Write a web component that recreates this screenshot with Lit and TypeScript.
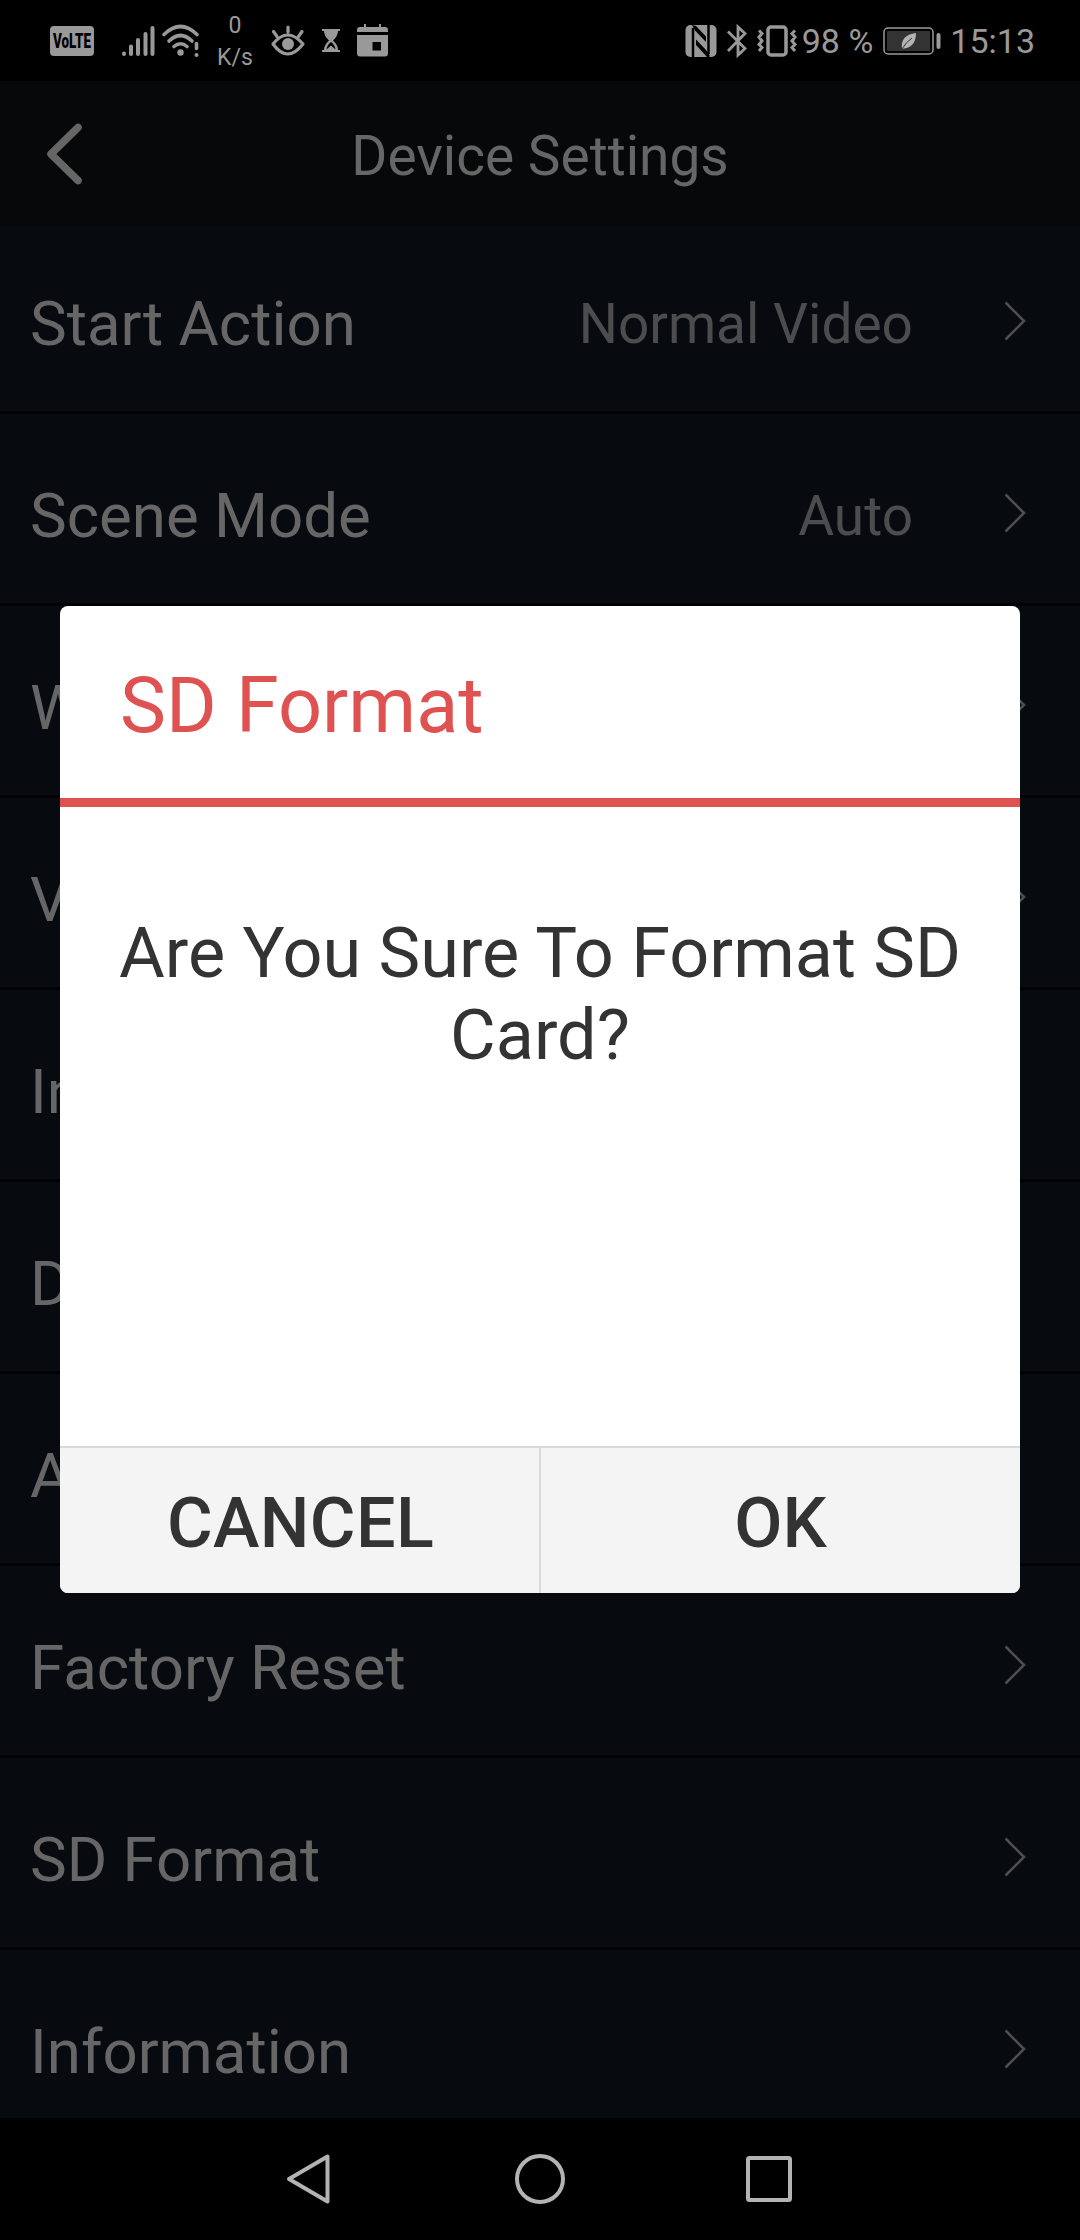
import { LitElement, html, css, svg } from "lit";
import { customElement } from "lit/decorators.js";

interface Row {
  label: string;
  value?: string;
  plain?: boolean;
}

const ROWS: Row[] = [
  { label: "Start Action", value: "Normal Video" },
  { label: "Scene Mode", value: "Auto" },
  { label: "W" },
  { label: "V" },
  { label: "In", plain: true },
  { label: "D", plain: true },
  { label: "A", plain: true },
  { label: "Factory Reset" },
  { label: "SD Format" },
  { label: "Information" },
];

@customElement("app-root")
export class AppRoot extends LitElement {
  static styles = css`
    :host {
      display: block;
      font-family: Roboto, "Noto Sans", sans-serif;
    }
    .screen {
      position: relative;
      display: flex;
      flex-direction: column;
      width: 1080px;
      height: 2240px;
      overflow: hidden;
      background: #000;
    }
    svg {
      display: block;
      flex: none;
      overflow: visible;
    }
    .status {
      display: flex;
      align-items: center;
      height: 81px;
      flex: none;
      box-sizing: border-box;
      padding-left: 50px;
      padding-right: 45px;
      color: #999;
      font-size: 34px;
    }
    .volte-text {
      font: 900 19.5px Roboto, sans-serif;
    }
    .signal { margin-left: 27px; }
    .wifi { margin-left: 7px; }
    .speed {
      display: flex;
      flex-direction: column;
      align-items: center;
      width: 40px;
      margin-left: 15px;
      padding-top: 2px;
      font-size: 23px;
      line-height: 32px;
    }
    .eye { margin-left: 16px; }
    .glass { margin-left: 17px; }
    .cal { margin-left: 17px; }
    .spacer { flex: 1; }
    .bt { margin-left: 10px; }
    .vib { margin-left: 10px; }
    .pct { margin-left: 5px; }
    .batt { margin-left: 10px; }
    .time { margin-left: 9px; }
    .header {
      position: relative;
      z-index: 1;
      display: grid;
      grid-template-columns: 130px 1fr 130px;
      align-items: center;
      height: 144px;
      flex: none;
      background: #070809;
      color: #666;
    }
    .back { margin-left: 43px; margin-top: 1px; }
    .title {
      text-align: center;
      font-size: 55px;
      line-height: 64px;
      padding-top: 5px;
    }
    .list {
      flex: 1;
      min-height: 0;
      margin-top: -3px;
      overflow: hidden;
      background: #070a0e;
    }
    .row {
      display: flex;
      align-items: center;
      height: 192px;
      box-sizing: border-box;
      border-bottom: 3px solid #000104;
      padding: 14px 53px 0 30px;
    }
    .label {
      flex: 1;
      color: #666;
      font-size: 61.8px;
      line-height: 72px;
      white-space: nowrap;
    }
    .value {
      color: #4b4c4d;
      font-size: 55px;
      line-height: 64px;
      margin-right: 90px;
    }
    .chevron { margin-bottom: 6px; }
    .nav {
      display: flex;
      align-items: center;
      justify-content: center;
      height: 122px;
      flex: none;
      background: #000;
      box-sizing: border-box;
    }
    .circle { margin-left: 182px; }
    .square { margin-left: 178px; }
    .dialog {
      position: absolute;
      left: 60px;
      top: 606px;
      z-index: 2;
      display: flex;
      flex-direction: column;
      width: 960px;
      height: 987px;
      border-radius: 8px;
      overflow: hidden;
      background: #fff;
      color: #333;
    }
    .dialog-title {
      display: flex;
      align-items: center;
      box-sizing: border-box;
      height: 201px;
      padding: 8px 60px 0;
      border-bottom: 9px solid #df5252;
      color: #df5252;
      font-size: 77.4px;
      line-height: 92px;
    }
    .message {
      flex: 1;
      padding: 105px 50px 0;
      text-align: center;
      font-size: 70.2px;
      line-height: 82px;
    }
    .buttons {
      display: grid;
      grid-template-columns: 479px 2px 479px;
      height: 145px;
      border-top: 2px solid #dadada;
      background: #f4f4f4;
      font-size: 70px;
      font-weight: 500;
      line-height: 151px;
      text-align: center;
    }
    .cancel { letter-spacing: 0.4px; padding-left: 2px; }
    .split { background: #dadada; }
  `;

  private statusBar() {
    return html`
      <div class="status">
        <svg width="44" height="30" viewBox="0 0 44 30">
          <rect width="44" height="30" rx="4" fill="#999" />
          <text class="volte-text" x="3" y="22" fill="#000" textLength="38" lengthAdjust="spacingAndGlyphs">VoLTE</text>
        </svg>
        <svg class="signal" width="34" height="32" viewBox="0 0 34 32" fill="none" stroke="#999" stroke-width="4" stroke-linecap="round">
          <path d="M3 28.5v.5M10 21.500v7.500M17 15v14M24.500 9v20M31.500 3v26" />
        </svg>
        <svg class="wifi" width="38" height="34" viewBox="0 0 38 34" fill="none" stroke="#999" stroke-width="3.600" stroke-linecap="round">
          <path d="M2 10.500Q18.500 -5.500 35 10.500M7 17Q18.500 6 30 17M12 22.500Q18.500 17 25 22.500M34.500 19.500v5" />
          <circle cx="18.500" cy="28.500" r="3.200" fill="#999" stroke="none" />
          <circle cx="34.500" cy="31" r="2" fill="#999" stroke="none" />
        </svg>
        <div class="speed"><span>0</span><span>K/s</span></div>
        <svg class="eye" width="34" height="32" viewBox="0 0 34 32" fill="none" stroke="#999" stroke-width="3.200" stroke-linecap="round">
          <path d="M2 19Q16.500 1 32 19Q16.500 39 2 19ZM17 2v5M2.500 6.500l3.500 5M31 6.500l-3.500 5" stroke-linejoin="round" />
          <circle cx="17" cy="19" r="6" fill="#999" stroke="none" />
        </svg>
        <svg class="glass" width="18" height="23" viewBox="0 0 18 23">
          <path d="M0 0H18V2H16Q16 7 11 11.500Q16 16 16 21H18V23H0V21H2Q2 16 7 11.500Q2 7 2 2H0Z" fill="#999" />
          <path d="M4.500 20.500Q5 16 9 13Q13 16 13.500 20.500L9 16.500Z" fill="#000" />
        </svg>
        <svg class="cal" width="31" height="33" viewBox="0 0 31 33">
          <path d="M0 8V6Q0 3 3 3H7V0H9V3H22V0H24V3H28Q31 3 31 6V8ZM0 11H31V29Q31 32.500 28 32.500H3Q0 32.500 0 29ZM15.500 18V26.500H24V18Z" fill="#999" fill-rule="evenodd" />
        </svg>
        <div class="spacer"></div>
        <svg width="32" height="32" viewBox="0 0 32 32">
          <rect x="0.500" width="31" height="32" rx="5" fill="#999" />
          <path d="M8 3V32M23.500 0V29" fill="none" stroke="#000" stroke-width="2.500" />
          <path d="M7 0L11 1L21 11.500V17L10 5.500ZM11 14.500L21 25L24.500 30V32H22L11 20Z" fill="#000" />
        </svg>
        <svg class="bt" width="20" height="32" viewBox="0 0 20 32" fill="none" stroke="#999" stroke-width="2.800">
          <path d="M1 6.500L18 23.500L11 30V2L18 8.500L1 26" />
        </svg>
        <svg class="vib" width="40" height="32" viewBox="0 0 40 32" fill="none" stroke="#999">
          <rect x="11" y="2" width="18" height="28" rx="3" stroke-width="3.500" />
          <path d="M2 5.500L5 8.500L2 12L5 16L2 19.500L5 22.500L2 26M38 5.500L35 8.500L38 12L35 16L38 19.500L35 22.500L38 26" stroke-width="3" />
        </svg>
        <span class="pct">98 %</span>
        <svg class="batt" width="58" height="28" viewBox="0 0 58 28">
          <rect x="1" y="1" width="49" height="26" rx="4" fill="none" stroke="#999" stroke-width="1.500" />
          <rect x="4" y="4" width="43" height="20" rx="1" fill="#333" />
          <path d="M19 22Q17 8 33 6Q33 20 21 21.500Z" fill="#b3b3b3" />
          <path d="M19 22Q23 15 29 11" stroke="#333" fill="none" />
          <rect x="53.500" y="6" width="4" height="16" rx="2" fill="#999" />
        </svg>
        <span class="time">15:13</span>
      </div>
    `;
  }

  private row(r: Row) {
    return html`
      <div class="row">
        <span class="label">${r.label}</span>
        ${r.value ? html`<span class="value">${r.value}</span>` : null}
        ${r.plain
          ? null
          : html`<svg class="chevron" width="24" height="40" viewBox="0 0 24 40" fill="none" stroke="#4d4e4f" stroke-width="2.600">
              ${svg`<path d="M2.500 1.500L21 20L2.500 38.500" />`}
            </svg>`}
      </div>
    `;
  }

  render() {
    return html`
      <div class="screen">
        ${this.statusBar()}
        <div class="header">
          <svg class="back" width="44" height="66" viewBox="0 0 44 66" fill="none" stroke="#666" stroke-width="7.500" stroke-linecap="round" stroke-linejoin="round">
            <path d="M35 6.500L8 33L35 59.500" />
          </svg>
          <div class="title">Device Settings</div>
        </div>
        <div class="list">${ROWS.map((r) => this.row(r))}</div>
        <div class="nav">
          <svg width="46" height="52" viewBox="0 0 46 52" fill="none" stroke="#b3b3b3" stroke-width="4" stroke-linejoin="round">
            <path d="M41.500 3.500V48.500L3 26Z" />
          </svg>
          <svg class="circle" width="52" height="52" viewBox="0 0 52 52" fill="none" stroke="#b3b3b3" stroke-width="4">
            <circle cx="26" cy="26" r="23" />
          </svg>
          <svg class="square" width="50" height="52" viewBox="0 0 50 52" fill="none" stroke="#b3b3b3" stroke-width="4">
            <rect x="4" y="5" width="42" height="42" rx="1.500" />
          </svg>
        </div>
        <div class="dialog">
          <div class="dialog-title">SD Format</div>
          <div class="message">Are You Sure To Format SD Card?</div>
          <div class="buttons"><span class="cancel">CANCEL</span><span class="split"></span><span>OK</span></div>
        </div>
      </div>
    `;
  }
}
